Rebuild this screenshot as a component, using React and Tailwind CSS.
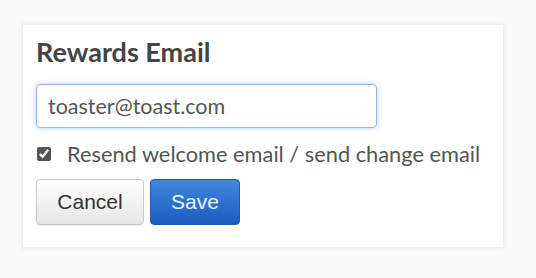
import React, { useState } from "react";

function App() {
  const [email, setEmail] = useState("toaster@toast.com");
  const [resend, setResend] = useState(true);
  return (
    <div className="w-[536px] h-[278px] bg-[#fafafa] pt-[24px] pl-[22px]">
      <div className="w-[482px] h-[224px] bg-white border border-[#ececec] shadow-[0_0_6px_rgba(0,0,0,0.08)] pl-[13px] pt-[12px]">
        <h1 className="text-[27px] leading-[30px] font-bold text-[#444] font-['Lato',sans-serif]">Rewards Email</h1>
        <input
          className="mt-[17px] w-[341px] h-[44px] border border-[#8fb8ec] rounded-[4px] shadow-[0_0_5px_rgba(82,151,230,0.45)] px-[11px] text-[21.5px] text-[#555] outline-none font-['Lato',sans-serif]"
          value={email}
          onChange={(e) => setEmail(e.target.value)}
        />
        <label className="mt-[13px] flex items-center h-[26px] font-['Lato',sans-serif]">
          <input type="checkbox" className="w-[14px] h-[14px] ml-[1px] accent-[#555]" checked={resend} onChange={(e) => setResend(e.target.checked)} />
          <span className="ml-[16px] text-[21.8px] text-[#555]">Resend welcome email / send change email</span>
        </label>
        <div className="mt-[12px] flex gap-[6px] font-['Liberation_Sans',Arial,sans-serif]">
          <button className="w-[108px] h-[46px] rounded-[4px] border border-[#c8c8c8] bg-gradient-to-b from-[#ffffff] to-[#e6e6e6] text-[21px] text-[#333] shadow-[0_1px_1px_rgba(0,0,0,0.08)]">Cancel</button>
          <button className="w-[90px] h-[46px] rounded-[4px] border border-[#1f5bb5] bg-gradient-to-b from-[#4087dc] to-[#1c5cc0] text-[21px] text-[#eef4fc]">Save</button>
        </div>
      </div>
    </div>
  );
}

export default App;
